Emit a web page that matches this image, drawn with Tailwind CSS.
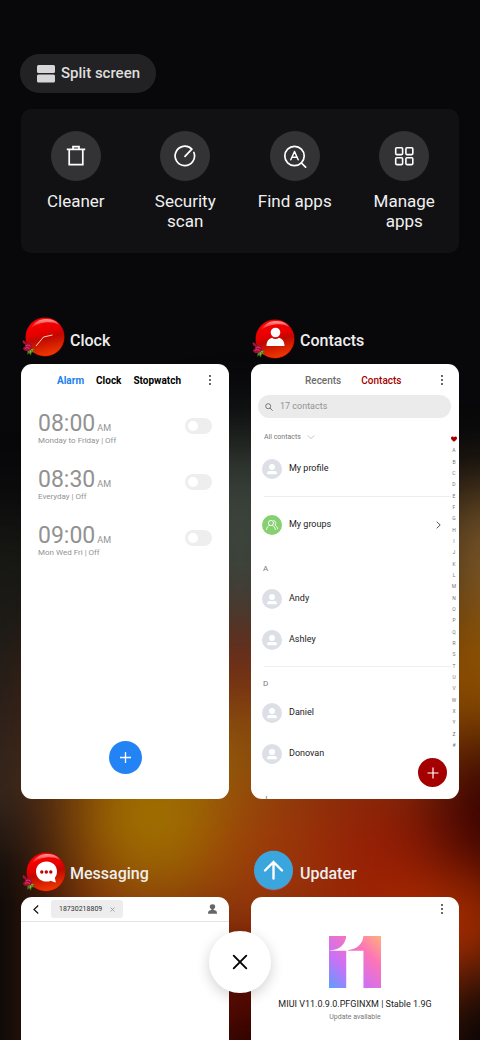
<!DOCTYPE html>
<html lang="en">
<head>
<meta charset="utf-8">
<meta name="viewport" content="width=device-width, initial-scale=1">
<title>Recent apps</title>
<script src="https://cdn.jsdelivr.net/npm/@tailwindcss/browser@4"></script>
</head>
<body class="bg-[#08080a] font-['Roboto','Noto_Sans',sans-serif] text-white">

<!-- Shared symbols -->
<svg class="absolute size-0" aria-hidden="true">
  <defs>
    <radialGradient id="gloss" cx="50%" cy="45%" r="62%">
      <stop offset="0" stop-color="#ee0000"/><stop offset=".55" stop-color="#d80000"/><stop offset="1" stop-color="#b80000"/>
    </radialGradient>
    <linearGradient id="glow" x1=".3" y1="0" x2=".55" y2="1">
      <stop offset="0" stop-color="#ff0000"/><stop offset=".4" stop-color="#e60000"/><stop offset=".55" stop-color="#c00800"/><stop offset="1" stop-color="#ee3a00"/>
    </linearGradient>
    <linearGradient id="shine" x1="0" y1="0" x2="0" y2="1">
      <stop offset="0" stop-color="#fff" stop-opacity=".6"/><stop offset="1" stop-color="#fff" stop-opacity=".05"/>
    </linearGradient>
    <linearGradient id="eleven" x1="0" y1="1" x2="1" y2="0">
      <stop offset="0" stop-color="#5c9dff"/><stop offset=".35" stop-color="#cc70f5"/><stop offset=".7" stop-color="#fc74b8"/><stop offset="1" stop-color="#ffb07c"/>
    </linearGradient>
  </defs>
  <symbol id="orb" viewBox="0 0 44 42">
    <circle cx="24" cy="20" r="19.500" fill="url(#gloss)"/>
    <circle cx="24" cy="20" r="19" fill="url(#glow)"/>
    <path d="M10 11C14 4 20 1.800 26 2C32 2.200 36 4.500 38 8C34 5.500 29 5 24 5.500C18 6.200 14 8 10 11Z" fill="url(#shine)"/>
  </symbol>
  <symbol id="rose" viewBox="0 0 14 17">
    <path d="M5 9L13 10L10.500 11.500L12.500 13.500L9.500 13L9 16.500L7 14L5.500 16L5.500 12Z" fill="#4f8a1c"/>
    <path d="M8 10L11 11M8 11L9 14" stroke="#9ccb4a" stroke-width=".8"/>
    <path d="M1 1L3.500 2.500L4.500 5L2 5L.5 3Z" fill="#a81238"/>
    <path d="M3 5C5 3 9 4 10 6C11 9 9 12 6 12C3 12.500 1 11 1 9L3 7.500Z" fill="#a50d38"/>
    <path d="M4 7C6 5.500 8 6 8.500 7.500M3 9.500C5 8 7 8.500 7.500 10" stroke="#e04a70" stroke-width=".9" fill="none"/>
  </symbol>
  <symbol id="dots" viewBox="0 0 4 12">
    <g fill="#222"><circle cx="2" cy="2" r=".9"/><circle cx="2" cy="6" r=".9"/><circle cx="2" cy="10" r=".9"/></g>
  </symbol>
  <symbol id="avatar" viewBox="0 0 20 20">
    <circle cx="10" cy="10" r="10" fill="#dcdfe6"/>
    <circle cx="10" cy="8" r="3" fill="#fff"/>
    <path d="M5 14.200C5 12.500 6.500 12 8 12H12C13.500 12 15 12.500 15 14.200C15 15 14.500 15.200 14 15.200H6C5.500 15.200 5 15 5 14.200Z" fill="#fff"/>
  </symbol>
</svg>

<div class="relative isolate h-dvh overflow-hidden">
  <!-- Blurred wallpaper -->
  <svg class="absolute inset-0 -z-10 h-full w-full" viewBox="0 0 480 1040" preserveAspectRatio="none" aria-hidden="true">
    <defs><filter id="soft" filterUnits="userSpaceOnUse" x="-200" y="200" width="880" height="1200" color-interpolation-filters="sRGB"><feGaussianBlur stdDeviation="36"/></filter></defs>
    <rect width="480" height="1040" fill="#08080a"/>
    <g filter="url(#soft)">
      <rect x="-200" y="520" width="270" height="140" fill="#1a1a16"/>
      <rect x="-200" y="660" width="240" height="110" fill="#241f1c"/>
      <rect x="50" y="640" width="390" height="600" fill="#82300c"/>
      <ellipse cx="240" cy="545" rx="85" ry="110" fill="#3c443c"/>
      <rect x="180" y="625" width="110" height="70" fill="#6e2616"/>
      <ellipse cx="155" cy="815" rx="75" ry="80" fill="#a07000"/>
      <rect x="200" y="700" width="80" height="90" fill="#8c5a0c"/>
      <rect x="220" y="795" width="110" height="120" fill="#9c380a"/>
      <rect x="430" y="490" width="250" height="125" fill="#7a5628"/>
      <rect x="420" y="610" width="260" height="130" fill="#8c5000"/>
      <rect x="330" y="800" width="110" height="150" fill="#941a04"/>
      <rect x="440" y="745" width="240" height="140" fill="#340000"/>
      <ellipse cx="450" cy="925" rx="90" ry="50" fill="#b03000"/>
      <rect x="-200" y="740" width="235" height="100" fill="#36291f"/>
      <rect x="-200" y="860" width="245" height="400" fill="#080808"/>
      <rect x="180" y="960" width="160" height="60" fill="#600400"/>
      <rect x="180" y="1020" width="160" height="200" fill="#200200"/>
      <rect x="420" y="995" width="260" height="250" fill="#080404"/>
    </g>
  </svg>

  <main class="px-[21px] pt-[54px]">
    <button class="-ml-px flex h-[39px] items-center gap-[6px] rounded-full bg-[#222224] pr-4 pl-[17px] text-[15px] font-medium text-[#dedede]">
      <svg class="size-[18px]" viewBox="0 0 18 18" fill="#d6d6d8" aria-hidden="true"><rect width="18" height="8" rx="1.500"/><rect y="9.500" width="18" height="8" rx="1.500"/></svg>
      Split screen
    </button>

    <nav aria-label="Tools" class="mt-4 grid h-36 grid-cols-4 rounded-[10px] bg-[#111113] pt-[22px] text-[17px] leading-5 text-[#f0f0f0]">
      <button class="flex flex-col items-center gap-[10px]">
        <span class="grid size-[50px] place-items-center rounded-full bg-[#333335]">
          <svg class="size-6" viewBox="0 0 24 24" fill="none" stroke="#fff" stroke-width="1.700" aria-hidden="true"><path d="M2.800 5.300H21.200M9 5V2.700H15V5M5.200 5.500V20.700H18.800V5.500"/></svg>
        </span>
        Cleaner
      </button>
      <button class="flex flex-col items-center gap-[10px]">
        <span class="grid size-[50px] place-items-center rounded-full bg-[#333335]">
          <svg class="size-6" viewBox="0 0 24 24" fill="none" stroke="#fff" stroke-width="1.700" stroke-linecap="round" aria-hidden="true"><path d="M12 12.300L18.800 5.200A9.700 9.700 0 1 0 20.900 8.500"/></svg>
        </span>
        <span>Security<br>scan</span>
      </button>
      <button class="flex flex-col items-center gap-[10px]">
        <span class="grid size-[50px] place-items-center rounded-full bg-[#333335]">
          <svg class="size-6" viewBox="0 0 24 24" fill="none" stroke="#fff" stroke-width="1.700" stroke-linecap="round" stroke-linejoin="round" aria-hidden="true"><circle cx="11.500" cy="12" r="9.700"/><path d="M18.400 19L22.600 23.200"/><path d="M7.800 15.800L11.500 7.500L15.200 15.800M9.300 13.200H13.700" stroke-width="1.500"/></svg>
        </span>
        Find apps
      </button>
      <button class="flex flex-col items-center gap-[10px]">
        <span class="grid size-[50px] place-items-center rounded-full bg-[#333335]">
          <svg class="size-6" viewBox="0 0 24 24" fill="none" stroke="#fff" stroke-width="1.600" aria-hidden="true"><rect x="3.700" y="3.700" width="6.900" height="6.900" rx="1"/><rect x="13.900" y="3.700" width="6.900" height="6.900" rx="1"/><rect x="3.700" y="13.700" width="6.900" height="6.900" rx="1"/><rect x="13.900" y="13.700" width="6.900" height="6.900" rx="1"/></svg>
        </span>
        <span>Manage<br>apps</span>
      </button>
    </nav>

    <div class="mt-16 grid grid-cols-2 gap-x-[22px] gap-y-[51px]">

      <!-- Clock -->
      <section>
        <h2 class="flex h-[47px] items-start gap-[5px] text-base font-medium text-[#eee]">
          <svg class="h-[42px] w-11" viewBox="0 0 44 42" aria-hidden="true"><use href="#orb" width="44" height="42"/><path d="M31.500 18L22.500 20L15 29" fill="none" stroke="#ffd0c8" stroke-width="1"/><use href="#rose" x="1" y="22" width="14" height="17"/></svg>
          <span class="pt-3">Clock</span>
        </h2>
        <div class="flex aspect-[208/435] flex-col overflow-hidden rounded-[11px] bg-white text-black">
          <div class="flex h-8 items-center pl-9 text-[10px] font-bold">
            <button class="text-[#2080f0]">Alarm</button>
            <button class="ml-3">Clock</button>
            <button class="ml-3">Stopwatch</button>
            <button class="mr-[17px] ml-auto" aria-label="More options"><svg class="h-3 w-1" aria-hidden="true"><use href="#dots"/></svg></button>
          </div>
          <ul class="pt-[7px] pr-[17px] pl-[17px] text-[#929292]">
            <li class="flex h-14 justify-between pt-[9px]">
              <label for="a1"><span class="flex items-baseline gap-[2px] text-[23px] leading-6">08:00 <small class="text-[9px] leading-none">AM</small></span><span class="block text-[8px] leading-[10px]">Monday to Friday | Off</span></label>
              <input id="a1" type="checkbox" role="switch" class="mt-[6px] h-4 w-[27px] appearance-none rounded-full bg-[#eee] p-[3px] before:block before:size-[10px] before:rounded-full before:bg-white checked:bg-[#2080f0]">
            </li>
            <li class="flex h-14 justify-between pt-[9px]">
              <label for="a2"><span class="flex items-baseline gap-[2px] text-[23px] leading-6">08:30 <small class="text-[9px] leading-none">AM</small></span><span class="block text-[8px] leading-[10px]">Everyday | Off</span></label>
              <input id="a2" type="checkbox" role="switch" class="mt-[6px] h-4 w-[27px] appearance-none rounded-full bg-[#eee] p-[3px] before:block before:size-[10px] before:rounded-full before:bg-white checked:bg-[#2080f0]">
            </li>
            <li class="flex h-14 justify-between pt-[9px]">
              <label for="a3"><span class="flex items-baseline gap-[2px] text-[23px] leading-6">09:00 <small class="text-[9px] leading-none">AM</small></span><span class="block text-[8px] leading-[10px]">Mon Wed Fri | Off</span></label>
              <input id="a3" type="checkbox" role="switch" class="mt-[6px] h-4 w-[27px] appearance-none rounded-full bg-[#eee] p-[3px] before:block before:size-[10px] before:rounded-full before:bg-white checked:bg-[#2080f0]">
            </li>
          </ul>
          <button class="mx-auto mt-auto mb-[25px] grid size-[33px] place-items-center rounded-full bg-[#2383f5]" aria-label="Add alarm">
            <svg class="size-[13px]" viewBox="0 0 13 13" stroke="#fff" stroke-width="1.300" aria-hidden="true"><path d="M6.500 1V12M1 6.500H12"/></svg>
          </button>
        </div>
      </section>

      <!-- Contacts -->
      <section>
        <h2 class="flex h-[47px] items-start gap-[5px] text-base font-medium text-[#eee]">
          <svg class="mt-[2px] h-[42px] w-11" viewBox="0 0 44 42" aria-hidden="true"><use href="#orb" width="44" height="42"/><circle cx="24.500" cy="13.500" r="4.800" fill="#fff"/><path d="M15.500 27C15.500 22 18 19.800 21 18.800C23 20.500 26 20.500 28 18.800C31 19.800 33.500 22 33.500 27Z" fill="#fff"/><use href="#rose" x="1" y="22" width="14" height="17"/></svg>
          <span class="pt-3">Contacts</span>
        </h2>
        <div class="relative aspect-[208/435] overflow-hidden rounded-[11px] bg-white text-[9px] text-[#222]">
          <div class="flex h-8 items-center pl-[54px] text-[10px] font-medium">
            <button class="text-[#6c6c6c]">Recents</button>
            <button class="ml-5 text-[#a40000]">Contacts</button>
            <button class="mr-[15px] ml-auto" aria-label="More options"><svg class="h-3 w-1" aria-hidden="true"><use href="#dots"/></svg></button>
          </div>
          <label class="-mt-px mr-2 ml-[7px] flex h-[23px] items-center gap-[7px] rounded-full bg-[#ebebeb] pl-[7px]">
            <svg class="size-2 shrink-0" viewBox="0 0 8 8" fill="none" stroke="#777" stroke-width="1" aria-hidden="true"><circle cx="3.200" cy="3.200" r="2.500"/><path d="M5 5L7.700 7.700"/></svg>
            <input type="search" aria-label="Search contacts" placeholder="17 contacts" class="w-full min-w-0 bg-transparent text-[9px] outline-none placeholder:text-[#929292]">
          </label>
          <button class="mt-2 ml-[13px] flex h-[22px] items-center gap-[6px] text-[7px] text-[#777]">All contacts
            <svg class="h-1 w-2" viewBox="0 0 8 4" fill="none" stroke="#bbb" stroke-width=".8" aria-hidden="true"><path d="M.5 .3L4 3.500L7.500 .3"/></svg>
          </button>
          <a href="#" class="flex h-[42px] items-center gap-[7px] pl-[11px]"><svg class="size-5" aria-hidden="true"><use href="#avatar"/></svg>My profile</a>
          <hr class="mt-[6px] mr-2 ml-[13px] border-[#eee]">
          <a href="#" class="mt-[7px] flex h-[42px] items-center gap-[7px] pl-[11px]">
            <svg class="size-5" viewBox="0 0 20 20" aria-hidden="true"><circle cx="10" cy="10" r="10" fill="#86d070"/><g fill="none" stroke="#fff" stroke-width=".9" stroke-linecap="round"><circle cx="9" cy="8" r="2.600"/><path d="M4.500 14.500C4.800 12.300 6 11 7.500 10.300M10.500 10.300C12 11 13 12.500 13.300 14.500M11.800 5.600C14 5.800 14.500 8.700 12.800 10C14.500 11 15.300 12.200 15.600 13.800"/></g></svg>
            My groups
            <svg class="mr-[18px] ml-auto h-2 w-[5px]" viewBox="0 0 5 8" fill="none" stroke="#555" stroke-width="1" aria-hidden="true"><path d="M.7 .7L4.200 4L.7 7.300"/></svg>
          </a>
          <h3 class="mt-[14px] pl-3 text-[8px] leading-[18px] text-[#777]">A</h3>
          <a href="#" class="flex h-[41px] items-center gap-[7px] pl-[11px]"><svg class="size-5" aria-hidden="true"><use href="#avatar"/></svg>Andy</a>
          <a href="#" class="flex h-[41px] items-center gap-[7px] pl-[11px]"><svg class="size-5" aria-hidden="true"><use href="#avatar"/></svg>Ashley</a>
          <hr class="mt-[6px] mr-2 ml-[13px] border-[#eee]">
          <h3 class="mt-2 pl-3 text-[8px] leading-[18px] text-[#777]">D</h3>
          <a href="#" class="flex h-10 items-center gap-[7px] pl-[11px]"><svg class="size-5" aria-hidden="true"><use href="#avatar"/></svg>Daniel</a>
          <a href="#" class="flex h-[41px] items-center gap-[7px] pl-[11px]"><svg class="size-5" aria-hidden="true"><use href="#avatar"/></svg>Donovan</a>
          <h3 class="mt-4 pl-3 text-[8px] leading-[18px] text-[#777]">J</h3>

          <nav aria-label="Index" class="absolute top-[72px] right-[2px] flex h-[312px] w-[6px] flex-col items-center justify-between text-[5px] leading-[6px] text-[#777]">
            <a href="#" aria-label="Favourites"><svg class="h-[6px] w-[6px]" viewBox="0 0 6 6" fill="#a40000" aria-hidden="true"><path d="M3 5.800C1 4.300 0 3.300 0 2C0 .3 2.200 0 3 1.300C3.800 0 6 .3 6 2C6 3.300 5 4.300 3 5.800Z"/></svg></a>
            <a href="#">A</a><a href="#">B</a><a href="#">C</a><a href="#">D</a><a href="#">E</a><a href="#">F</a><a href="#">G</a><a href="#">H</a><a href="#">I</a><a href="#">J</a><a href="#">K</a><a href="#">L</a><a href="#">M</a><a href="#">N</a><a href="#">O</a><a href="#">P</a><a href="#">Q</a><a href="#">R</a><a href="#">S</a><a href="#">T</a><a href="#">U</a><a href="#">V</a><a href="#">W</a><a href="#">X</a><a href="#">Y</a><a href="#">Z</a><a href="#">#</a>
          </nav>
          <button class="absolute right-3 bottom-3 grid size-[29px] place-items-center rounded-full bg-[#a40000]" aria-label="Add contact">
            <svg class="size-3" viewBox="0 0 12 12" stroke="#fff" stroke-width="1.200" aria-hidden="true"><path d="M6 .5V11.500M.5 6H11.500"/></svg>
          </button>
        </div>
      </section>

      <!-- Messaging -->
      <section>
        <h2 class="flex h-[47px] items-start gap-[5px] text-base font-medium text-[#eee]">
          <svg class="mt-[2px] h-[42px] w-11" viewBox="0 0 44 42" aria-hidden="true"><use href="#orb" x="1" width="44" height="42"/><path d="M25.500 9.500C31.500 9.500 36 13.800 36 19.500C36 22 35.200 24 34 25.600C34 27.500 34.500 29 35 30.200C33 30.200 31.200 29.600 30 28.700C28.700 29.300 27 29.600 25.500 29.600C19.500 29.600 15 25.200 15 19.500C15 13.800 19.500 9.500 25.500 9.500Z" fill="#fff"/><g fill="#c40000"><circle cx="20.800" cy="20" r="1.700"/><circle cx="25.300" cy="20" r="1.700"/><circle cx="29.800" cy="20" r="1.700"/></g><use href="#rose" x="1" y="22" width="14" height="17"/></svg>
          <span class="pt-3">Messaging</span>
        </h2>
        <div class="aspect-[208/435] overflow-hidden rounded-[11px] bg-white text-[#333]">
          <div class="flex h-[25px] items-center border-b border-[#e4e4e4] pl-3">
            <button aria-label="Back"><svg class="h-[9px] w-[6px]" viewBox="0 0 6 9" fill="none" stroke="#111" stroke-width="1.200" aria-hidden="true"><path d="M5.200 .5L1 4.500L5.200 8.500"/></svg></button>
            <button class="ml-3 flex h-[18px] items-center gap-2 rounded-[3px] bg-[#ededed] px-2 text-[7px]">18730218809
              <svg class="size-[5px]" viewBox="0 0 5 5" stroke="#888" stroke-width=".7" aria-hidden="true"><path d="M.5 .5L4.500 4.500M4.500 .5L.5 4.500"/></svg>
            </button>
            <button class="mr-3 ml-auto" aria-label="Contact details"><svg class="h-[10px] w-[9px]" viewBox="0 0 8 10" preserveAspectRatio="none" fill="#666" aria-hidden="true"><circle cx="4" cy="2.700" r="2.400"/><path d="M3 4.500H5V6H3Z"/><path d="M0 9.700C0 7 1 6.200 4 5.800C7 6.200 8 7 8 9.700Z"/></svg></button>
          </div>
        </div>
      </section>

      <!-- Updater -->
      <section>
        <h2 class="flex h-[47px] items-start gap-[5px] text-base font-medium text-[#eee]">
          <svg class="h-[42px] w-11" viewBox="0 0 44 42" aria-hidden="true"><circle cx="22.500" cy="21" r="19.500" fill="#d63a30"/><circle cx="22.500" cy="20.300" r="19.500" fill="#3ba5de"/><path d="M22.500 28.500V12M14 20.500L22.500 12L31 20.500" fill="none" stroke="#fff" stroke-width="2.400" stroke-linecap="round"/></svg>
          <span class="pt-3">Updater</span>
        </h2>
        <div class="flex aspect-[208/435] flex-col items-center overflow-hidden rounded-[11px] bg-white">
          <div class="flex h-6 w-full items-center justify-end pr-[15px]">
            <button aria-label="More options"><svg class="h-3 w-1" aria-hidden="true"><use href="#dots"/></svg></button>
          </div>
          <svg class="mt-[15px] size-[52px]" viewBox="0 0 154 154" fill="url(#eleven)" role="img" aria-label="MIUI 11"><path d="M0 0H51C49 24 32 41 6 42L0 43.500H51V154H0ZM102 0H154V154H102V43.500H56V42C82 39 100 24 102 0Z"/></svg>
          <p class="mt-[10px] text-[9px] leading-3 whitespace-nowrap text-[#222]">MIUI V11.0.9.0.PFGINXM | Stable 1.9G</p>
          <p class="text-[7px] leading-[14px] text-[#777]">Update available</p>
        </div>
      </section>
    </div>
  </main>

  <div class="absolute inset-x-0 bottom-[47px] flex justify-center">
    <button class="grid size-[62px] place-items-center rounded-full bg-white shadow-[0_4px_14px_rgba(0,0,0,0.18)]" aria-label="Close all">
      <svg class="size-4" viewBox="0 0 16 16" stroke="#000" stroke-width="1.900" stroke-linecap="round" aria-hidden="true"><path d="M1.700 1.700L14.300 14.300M14.300 1.700L1.700 14.300"/></svg>
    </button>
  </div>
</div>
</body>
</html>
